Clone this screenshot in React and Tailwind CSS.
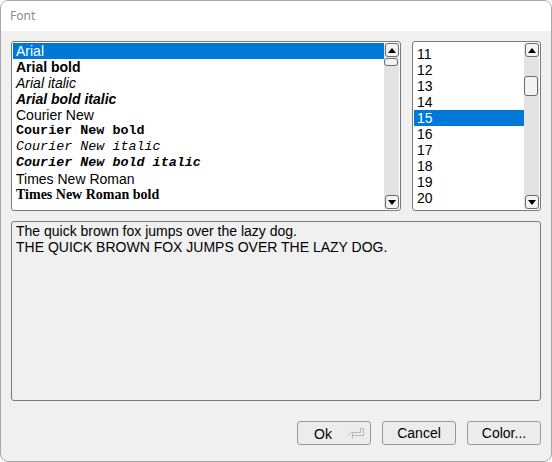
import React from 'react'

const sans = "font-['Liberation_Sans',Arial,sans-serif] text-[14px]"
const mono = "font-['Liberation_Mono','Courier_New',monospace] text-[13.4px]"

const fonts = [
  { name: 'Arial', cls: sans },
  { name: 'Arial bold', cls: `${sans} font-bold` },
  { name: 'Arial italic', cls: `${sans} italic` },
  { name: 'Arial bold italic', cls: `${sans} font-bold italic` },
  { name: 'Courier New', cls: sans },
  { name: 'Courier New bold', cls: `${mono} font-bold` },
  { name: 'Courier New italic', cls: `${mono} italic` },
  { name: 'Courier New bold italic', cls: `${mono} font-bold italic` },
  { name: 'Times New Roman', cls: sans },
  { name: 'Times New Roman bold', cls: "font-['Liberation_Serif',serif] text-[14px] font-bold" },
]

const sizes = [11, 12, 13, 14, 15, 16, 17, 18, 19, 20]

function ArrowButton({ down }) {
  return (
    <div className="w-[14px] h-[14px] mx-auto rounded-[3px] border border-[#6b6b6b] bg-[#f3f3f3] flex items-center justify-center">
      <svg width="8" height="5" viewBox="0 0 8 5">
        {down ? <path d="M0 0 H8 L4 5 Z" fill="#000" /> : <path d="M0 5 H8 L4 0 Z" fill="#000" />}
      </svg>
    </div>
  )
}

function Scrollbar({ thumbTop, thumbHeight }) {
  return (
    <div className="w-[15px] h-full bg-[#e3e3e3] relative flex flex-col justify-between">
      <ArrowButton />
      <div
        className="absolute left-0 w-[14px] rounded-[3px] border border-[#6b6b6b] bg-[#f3f3f3]"
        style={{ top: thumbTop, height: thumbHeight }}
      />
      <ArrowButton down />
    </div>
  )
}

function Button({ children, enter }) {
  return (
    <button className="relative w-[74px] h-[24px] rounded-[3px] border border-[#9a9a9a] bg-[#ececec] text-[14px] text-black font-['Liberation_Sans',Arial,sans-serif]">
      {children}
      {enter && (
        <svg className="absolute right-[5px] top-[6px]" width="18" height="11" viewBox="0 0 18 11">
          <path d="M13.5 0.5 H16.5 V7.5 H5.5 M5.5 4.5 V10.5 M5.5 4.5 H13.5 V0.5 M1 7.5 L5 3.5" fill="none" stroke="#b8b8b8" strokeWidth="1" />
        </svg>
      )}
    </button>
  )
}

export default function App() {
  return (
    <div className="w-[552px] h-[462px] bg-white relative overflow-hidden font-['Liberation_Sans',Arial,sans-serif]">
      <div className="relative w-full h-full rounded-[8px] border border-[#a8a8a8] overflow-hidden flex flex-col bg-[#f0f0f0]">
        <div className="h-[30px] bg-white pl-[9px] flex items-center text-[12px] text-[#8c8c8c] font-['Noto_Sans',sans-serif]">
          Font
        </div>
        <div className="flex-1 px-[10px] pt-[10px]">
          <div className="flex gap-[11px] h-[170px]">
            <div className="w-[390px] h-full rounded-[3px] border border-[#7a7a7a] bg-white p-[1px] flex">
              <div className="flex-1 flex flex-col">
                {fonts.map((f, i) => (
                  <div
                    key={f.name}
                    className={`h-[16px] leading-[16px] pl-[3px] whitespace-nowrap ${f.cls} ${i === 0 ? 'bg-[#0078d7] text-white' : 'text-black'}`}
                  >
                    {f.name}
                  </div>
                ))}
              </div>
              <Scrollbar thumbTop={15} thumbHeight={8} />
            </div>
            <div className="w-[129px] h-full rounded-[3px] border border-[#7a7a7a] bg-white p-[1px] flex">
              <div className="flex-1 flex flex-col pt-[3px]">
                {sizes.map(s => (
                  <div
                    key={s}
                    className={`h-[16px] leading-[16px] pl-[3px] text-[14px] ${s === 15 ? 'bg-[#0078d7] text-white' : 'text-black'}`}
                  >
                    {s}
                  </div>
                ))}
              </div>
              <Scrollbar thumbTop={33} thumbHeight={20} />
            </div>
          </div>
          <div className="mt-[10px] w-[530px] h-[180px] rounded-[3px] border border-[#7a7a7a] bg-[#f0f0f0] px-[4px] pt-[1px] text-[14px] leading-[16px] text-black">
            <div>The quick brown fox jumps over the lazy dog.</div>
            <div>THE QUICK BROWN FOX JUMPS OVER THE LAZY DOG.</div>
          </div>
          <div className="mt-[20px] flex justify-end gap-[11px]">
            <Button enter>
              <span className="absolute left-[16px] top-[2px]">Ok</span>
            </Button>
            <Button>Cancel</Button>
            <Button>Color...</Button>
          </div>
        </div>
      </div>
    </div>
  )
}
